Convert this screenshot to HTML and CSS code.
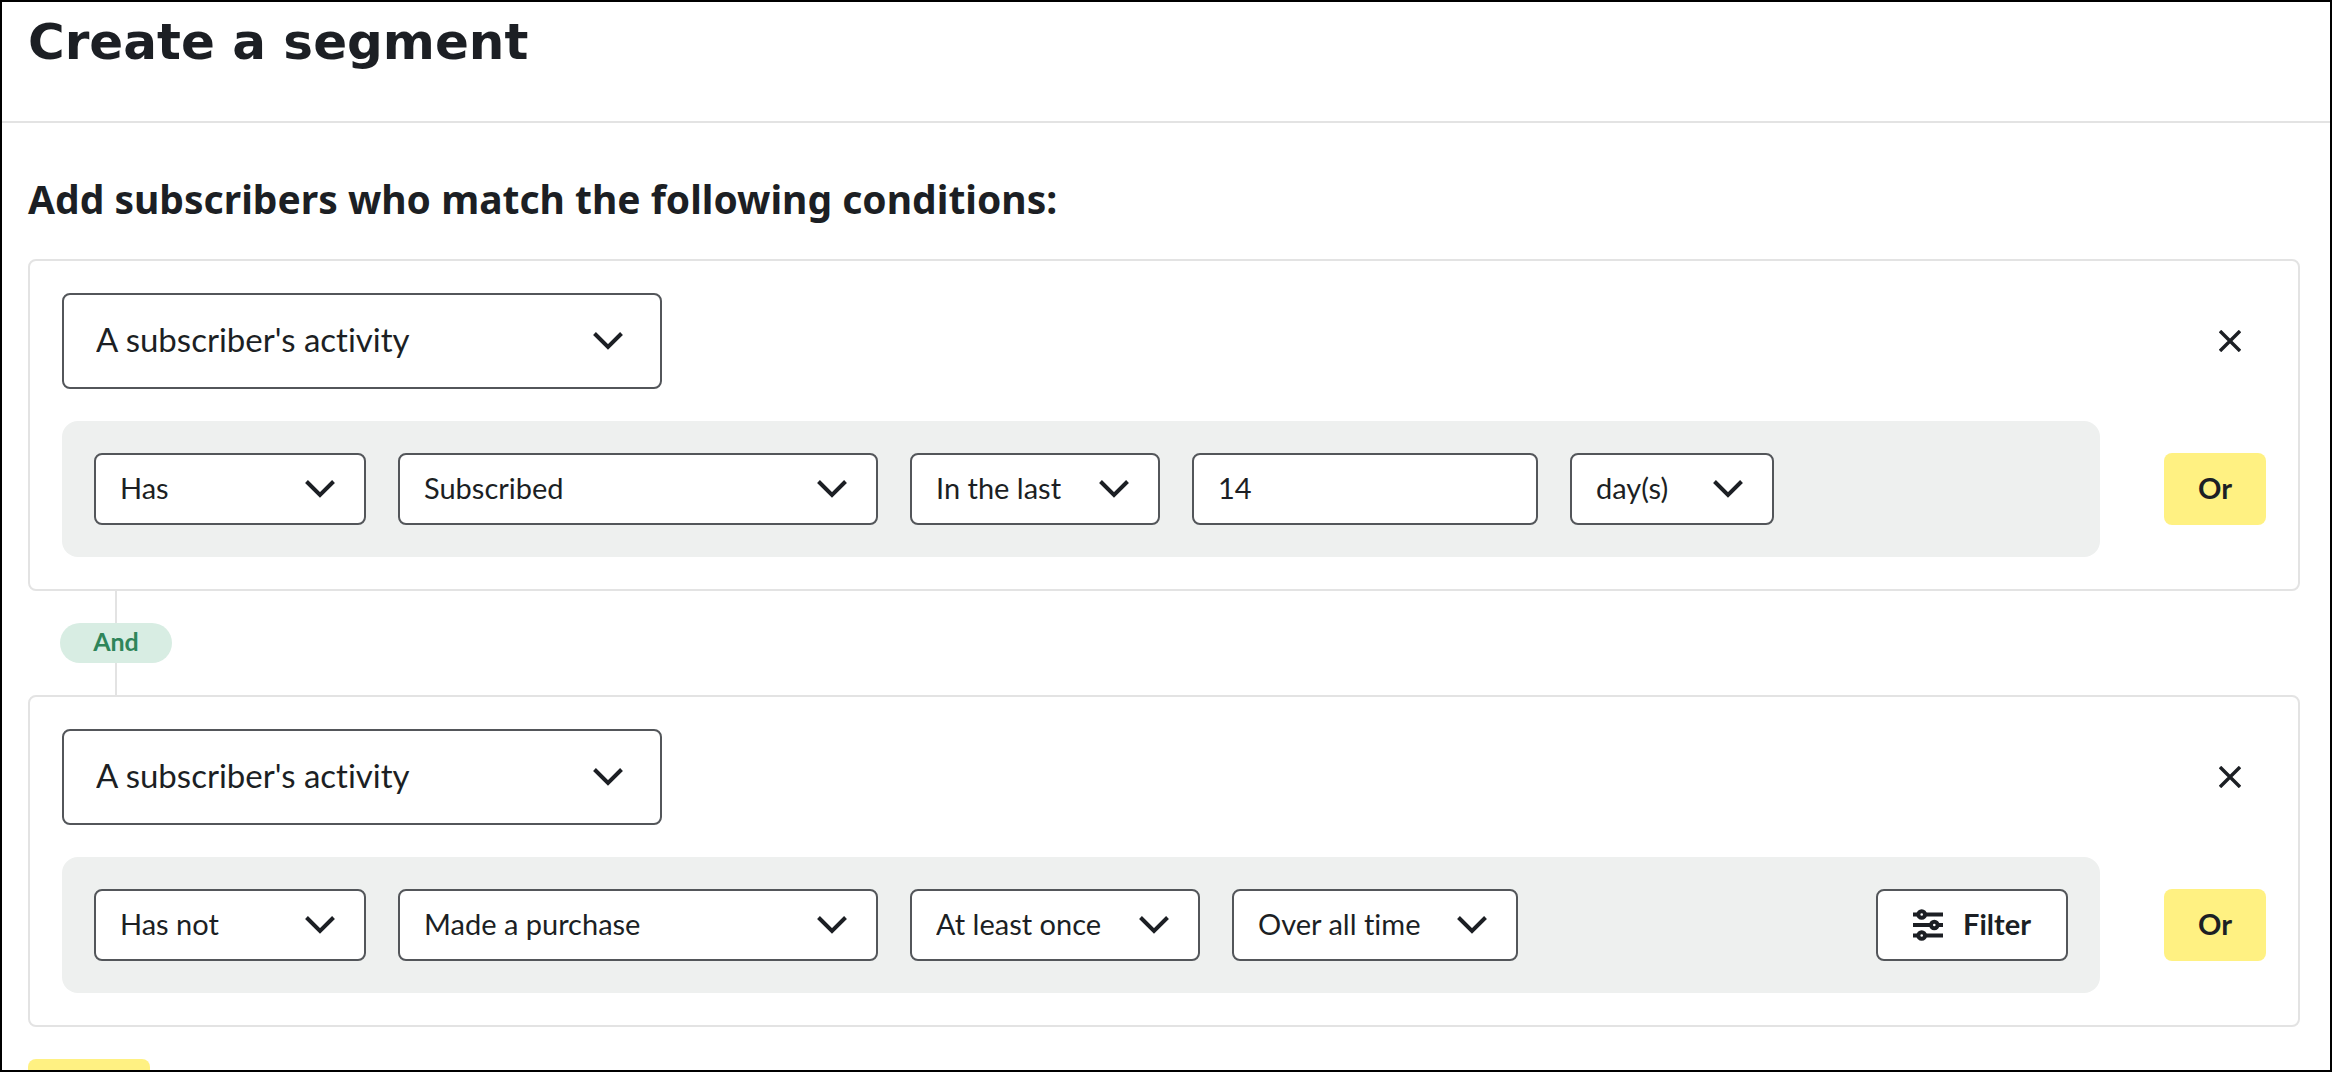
FILE: index.html
```html
<!DOCTYPE html>
<html lang="en">
<head>
    <meta charset="UTF-8">
    <meta name="viewport" content="width=device-width, initial-scale=1.0">
    <title>Create a segment</title>
    <link rel="stylesheet" href="styles.css">
</head>
<body>
    <header class="page-header">
        <h1>Create a segment</h1>
    </header>
    <main class="builder">
        <h2>Add subscribers who match the following conditions:</h2>

        <section class="group">
            <div class="group-top">
                <div class="dropdown dropdown-lg">
                    <select aria-label="Condition type">
                        <option>A subscriber's activity</option>
                    </select>
                    <svg class="chevron" viewBox="0 0 30 18"><path d="M1.5 1.5L15 15 28.5 1.5"/></svg>
                </div>
                <button class="close-btn" type="button" aria-label="Remove condition">
                    <svg viewBox="0 0 22 22"><path d="M1 1l20 20M21 1L1 21"/></svg>
                </button>
            </div>
            <div class="group-row">
                <div class="rule">
                    <div class="dropdown w-has">
                        <select aria-label="Has or has not">
                            <option>Has</option>
                            <option>Has not</option>
                        </select>
                        <svg class="chevron" viewBox="0 0 30 18"><path d="M1.5 1.5L15 15 28.5 1.5"/></svg>
                    </div>
                    <div class="dropdown w-action">
                        <select aria-label="Action">
                            <option>Subscribed</option>
                            <option>Made a purchase</option>
                        </select>
                        <svg class="chevron" viewBox="0 0 30 18"><path d="M1.5 1.5L15 15 28.5 1.5"/></svg>
                    </div>
                    <div class="dropdown w-range">
                        <select aria-label="Time range">
                            <option>In the last</option>
                        </select>
                        <svg class="chevron" viewBox="0 0 30 18"><path d="M1.5 1.5L15 15 28.5 1.5"/></svg>
                    </div>
                    <input class="amount" type="text" value="14" aria-label="Amount">
                    <div class="dropdown w-unit">
                        <select aria-label="Unit">
                            <option>day(s)</option>
                        </select>
                        <svg class="chevron" viewBox="0 0 30 18"><path d="M1.5 1.5L15 15 28.5 1.5"/></svg>
                    </div>
                </div>
                <button class="btn btn-or" type="button">Or</button>
            </div>
        </section>

        <div class="connector">
            <span class="badge">And</span>
        </div>

        <section class="group">
            <div class="group-top">
                <div class="dropdown dropdown-lg">
                    <select aria-label="Condition type">
                        <option>A subscriber's activity</option>
                    </select>
                    <svg class="chevron" viewBox="0 0 30 18"><path d="M1.5 1.5L15 15 28.5 1.5"/></svg>
                </div>
                <button class="close-btn" type="button" aria-label="Remove condition">
                    <svg viewBox="0 0 22 22"><path d="M1 1l20 20M21 1L1 21"/></svg>
                </button>
            </div>
            <div class="group-row">
                <div class="rule">
                    <div class="dropdown w-has">
                        <select aria-label="Has or has not">
                            <option>Has not</option>
                            <option>Has</option>
                        </select>
                        <svg class="chevron" viewBox="0 0 30 18"><path d="M1.5 1.5L15 15 28.5 1.5"/></svg>
                    </div>
                    <div class="dropdown w-action">
                        <select aria-label="Action">
                            <option>Made a purchase</option>
                            <option>Subscribed</option>
                        </select>
                        <svg class="chevron" viewBox="0 0 30 18"><path d="M1.5 1.5L15 15 28.5 1.5"/></svg>
                    </div>
                    <div class="dropdown w-count">
                        <select aria-label="Frequency">
                            <option>At least once</option>
                        </select>
                        <svg class="chevron" viewBox="0 0 30 18"><path d="M1.5 1.5L15 15 28.5 1.5"/></svg>
                    </div>
                    <div class="dropdown w-period">
                        <select aria-label="Time range">
                            <option>Over all time</option>
                        </select>
                        <svg class="chevron" viewBox="0 0 30 18"><path d="M1.5 1.5L15 15 28.5 1.5"/></svg>
                    </div>
                    <button class="filter-btn" type="button">
                        <svg viewBox="0 0 30 32">
                            <path d="M0 5.5h30M0 16h30M0 26.5h30"/>
                            <circle cx="8.7" cy="5.5" r="3.3"/>
                            <circle cx="21.3" cy="16" r="3.3"/>
                            <circle cx="8.7" cy="26.5" r="3.3"/>
                        </svg>
                        <span>Filter</span>
                    </button>
                </div>
                <button class="btn btn-or" type="button">Or</button>
            </div>
        </section>

        <button class="btn btn-add" type="button" aria-label="Add condition"></button>
    </main>
</body>
</html>
```

FILE: styles.css
```css
* { box-sizing: border-box; }
body { margin: 0; height: 100vh; overflow: hidden; border: 2px solid #000; background: #fff; color: #1c1f24; font-family: Lato, sans-serif; font-size: 29px; font-variant-ligatures: none; }
button, select, input { font: inherit; font-variant-ligatures: none; color: inherit; margin: 0; }
svg { display: block; fill: none; stroke: #1c1f24; }

.page-header { height: 121px; padding: 8px 26px; border-bottom: 2px solid #e3e3e3; }
h1 { margin: 0; font-family: "DejaVu Sans", sans-serif; font-size: 50px; line-height: 64px; font-weight: 700; }
h2 { margin: 0 0 32px; font-family: "Noto Sans", sans-serif; font-size: 39px; line-height: 56px; font-weight: 700; }
.builder { padding: 48px 30px 0 26px; }

.group { display: flex; flex-direction: column; gap: 32px; padding: 32px; border: 2px solid #e3e3e3; border-radius: 8px; }
.group-top { display: flex; align-items: center; justify-content: space-between; }
.group-row { display: flex; align-items: center; gap: 64px; }
.rule { flex: 1; display: flex; gap: 32px; padding: 32px; background: #eef0ef; border-radius: 16px; }

/* the select and its chevron share one grid cell */
.dropdown { display: grid; align-items: center; height: 72px; }
.dropdown select { grid-area: 1 / 1; width: 100%; height: 100%; padding: 0 64px 4px 24px; appearance: none; background: #fff; border: 2px solid #53565a; border-radius: 8px; }
.dropdown-lg { width: 600px; height: 96px; font-size: 33px; }
.dropdown-lg select { padding-left: 32px; }
.chevron { grid-area: 1 / 1; justify-self: end; width: 30px; height: 18px; margin-right: 31px; stroke-width: 4; pointer-events: none; }
.dropdown-lg .chevron { margin-right: 39px; }
.w-has { width: 272px; }
.w-action { width: 480px; }
.w-range { width: 250px; }
.w-unit { width: 204px; }
.w-count { width: 290px; }
.w-period { width: 286px; }
.amount { width: 346px; height: 72px; padding: 0 24px 4px; background: #fff; border: 2px solid #53565a; border-radius: 8px; }

.close-btn { display: grid; place-items: center; width: 72px; height: 72px; padding: 0; background: none; border: 0; cursor: pointer; }
.close-btn svg { width: 22px; height: 22px; stroke-width: 3.4; }

.btn { height: 72px; padding: 0 0 4px; background: #fff182; border: 0; border-radius: 8px; font-weight: 700; cursor: pointer; }
.btn-or { width: 102px; }
.btn-add { display: block; width: 122px; margin-top: 32px; }
.filter-btn { display: flex; align-items: center; justify-content: center; gap: 20px; width: 192px; height: 72px; margin-left: auto; padding: 0; background: #fff; border: 2px solid #53565a; border-radius: 8px; font-weight: 700; cursor: pointer; }
.filter-btn svg { width: 30px; height: 32px; stroke-width: 4; }
.filter-btn circle { fill: #fff; }
.filter-btn span { padding-bottom: 4px; }

.connector { display: flex; flex-direction: column; align-items: center; width: 112px; margin-left: 32px; }
.connector::before, .connector::after { content: ""; width: 2px; height: 32px; background: #e3e3e3; }
.badge { width: 112px; height: 40px; border-radius: 20px; background: #d8ede3; color: #2f855a; font-size: 25px; line-height: 36px; font-weight: 700; text-align: center; }
```
